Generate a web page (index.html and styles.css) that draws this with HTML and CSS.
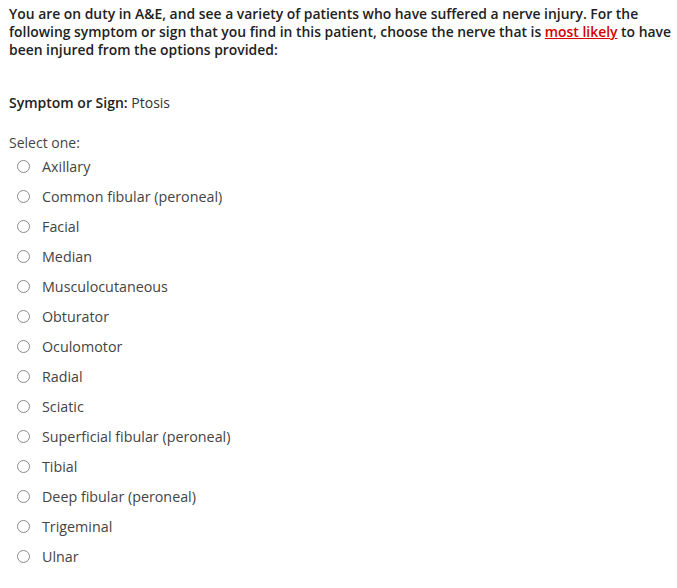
FILE: index.html
```html
<!DOCTYPE html>
<html>
<head>
<meta charset="utf-8">
<link rel="stylesheet" href="styles.css">
</head>
<body>
<div class="question">
  <p class="stem">You are on duty in A&amp;E, and see a variety of patients who have suffered a nerve injury. For the following symptom or sign that you find in this patient, choose the nerve that is <span class="hl">most likely</span> to have been injured from the options provided:</p>
  <p class="sign"><strong>Symptom or Sign:</strong> Ptosis</p>
  <div class="prompt">Select one:</div>
  <div class="options">
    <label class="opt"><span class="radio"></span>Axillary</label>
    <label class="opt"><span class="radio"></span>Common fibular (peroneal)</label>
    <label class="opt"><span class="radio"></span>Facial</label>
    <label class="opt"><span class="radio"></span>Median</label>
    <label class="opt"><span class="radio"></span>Musculocutaneous</label>
    <label class="opt"><span class="radio"></span>Obturator</label>
    <label class="opt"><span class="radio"></span>Oculomotor</label>
    <label class="opt"><span class="radio"></span>Radial</label>
    <label class="opt"><span class="radio"></span>Sciatic</label>
    <label class="opt"><span class="radio"></span>Superficial fibular (peroneal)</label>
    <label class="opt"><span class="radio"></span>Tibial</label>
    <label class="opt"><span class="radio"></span>Deep fibular (peroneal)</label>
    <label class="opt"><span class="radio"></span>Trigeminal</label>
    <label class="opt"><span class="radio"></span>Ulnar</label>
  </div>
</div>
</body>
</html>
```
FILE: styles.css
```css
html, body { margin: 0; padding: 0; background: #fff; }
body { font-family: "Open Sans", "Liberation Sans", sans-serif; color: #333; }
.question { padding: 5px 2px 0 9px; }
.stem { margin: 0; font-size: 13.9px; font-weight: 600; line-height: 18px; color: #222; }
.hl { color: #d40000; text-decoration: underline; }
.sign { margin: 34px 0 0 0; font-size: 14px; line-height: 20px; color: #333; }
.sign strong { font-weight: 600; color: #222; }
.prompt { margin-top: 20px; font-size: 14px; line-height: 20px; color: #444; }
.options { display: flex; flex-direction: column; padding-left: 8px; margin-top: -2px; }
.opt { display: flex; align-items: center; height: 30px; font-size: 14.3px; color: #444; }
.radio { width: 11px; height: 11px; border: 1px solid #8a8a8a; border-radius: 50%; margin-right: 12px; margin-top: 1px; box-sizing: content-box; }
```
